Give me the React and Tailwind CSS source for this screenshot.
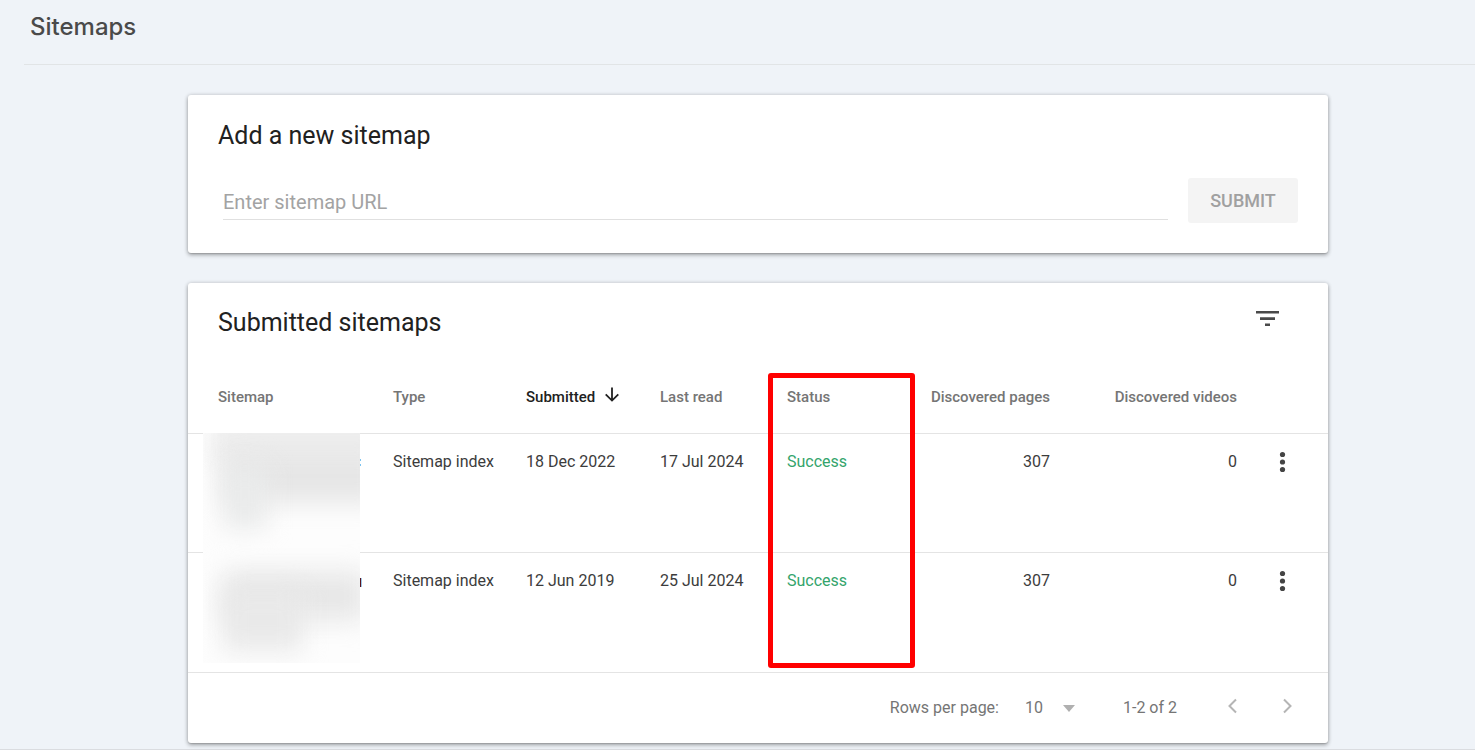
import React from "react";

const rows = [
  { type: "Sitemap index", submitted: "18 Dec 2022", read: "17 Jul 2024", status: "Success", pages: 307, videos: 0 },
  { type: "Sitemap index", submitted: "12 Jun 2019", read: "25 Jul 2024", status: "Success", pages: 307, videos: 0 },
];

const card =
  "rounded-[3px] bg-white shadow-[0_2px_4px_rgba(0,0,0,0.3),0_0_4px_rgba(0,0,0,0.14),0_1px_1px_rgba(0,0,0,0.1)]";

function FilterIcon() {
  return (
    <svg viewBox="0 0 30 30" className="size-[30px]" fill="currentColor" aria-hidden="true">
      <path d="M3 7h23v2.600h-23zM7 13.300h15v2.600h-15zM12 19.500h5v2.600h-5z" />
    </svg>
  );
}

function ArrowDownIcon() {
  return (
    <svg viewBox="0 0 16 16" className="size-4" fill="none" stroke="currentColor" strokeWidth="1.8" aria-hidden="true">
      <path d="M8 1.500v13M1.7 8.300 8 14.600l6.3-6.3" />
    </svg>
  );
}

function MoreIcon() {
  return (
    <svg viewBox="0 0 30 30" className="size-[30px]" fill="currentColor" aria-hidden="true">
      <circle cx="15.500" cy="7.5" r="2.6" />
      <circle cx="15.500" cy="15" r="2.6" />
      <circle cx="15.500" cy="22.5" r="2.6" />
    </svg>
  );
}

function Chevron({ d }) {
  return (
    <svg viewBox="0 0 16 16" className="size-4" fill="none" stroke="currentColor" strokeWidth="2" aria-hidden="true">
      <path d={d} />
    </svg>
  );
}

function Redaction() {
  return (
    <div className="absolute -top-px left-[15px] h-[230px] w-[159px]" aria-hidden="true">
      <div className="relative h-full w-[157px] overflow-hidden bg-[#fdfdfd]">
        <div className="absolute -top-8 left-2 h-16 w-52 bg-[#efefef] blur-[10px]" />
        <div className="absolute top-4 left-5 h-[54px] w-40 bg-[#e6e6e6] blur-[12px]" />
        <div className="absolute top-8 left-5 h-16 w-11 bg-[#eaebeb] blur-[12px]" />
        <div className="absolute top-[138px] left-5 h-[50px] w-36 bg-[#e7e7e7] blur-[13px]" />
        <div className="absolute top-[156px] left-5 h-[62px] w-20 bg-[#e9e9e9] blur-[12px]" />
      </div>
      <div className="absolute top-[26px] right-px h-[7px] w-px border-y-2 border-[#7cc4f0]" />
      <div className="absolute top-[145px] right-0 h-[9px] w-0.5 border-r border-[#9bc9ea] bg-[#5a1420]" />
    </div>
  );
}

export default function App() {
  return (
    <div className="flex min-h-screen flex-col border-b border-[#dadce0] bg-[#eff3f8] font-['Roboto',sans-serif] text-[#212121]">
      <header className="ml-6 border-b border-[#e1e4e6] px-1.5 pt-[9px] pb-[19px]">
        <h1 className="font-['Inter',sans-serif] text-2xl leading-9 font-medium text-[#4a4a4a]">Sitemaps</h1>
      </header>

      <main className="pt-[30px] pb-1.5 pl-[41px]">
        <div className="mx-auto flex max-w-[1140px] flex-col gap-[30px]">
          <section className={`${card} px-[30px] pt-[21px] pb-[30px]`}>
            <h2 className="text-[25px] leading-10">Add a new sitemap</h2>
            <form className="mt-[22px] flex gap-5 pl-[5px]" onSubmit={(e) => e.preventDefault()}>
              <input
                type="text"
                aria-label="Sitemap URL"
                placeholder="Enter sitemap URL"
                className="h-[42px] min-w-0 flex-1 border-b border-[#e0e0e0] pt-1.5 text-xl outline-none placeholder:text-[#a3a3a3]"
              />
              <button type="submit" disabled className="h-[45px] w-[110px] rounded-[3px] bg-[#f4f4f4] text-lg font-medium text-[#a0a0a0]">
                SUBMIT
              </button>
            </form>
          </section>

          <section className={card}>
            <div className="flex items-center justify-between pt-5 pr-[45px] pl-[30px]">
              <h2 className="text-[25px] leading-10">Submitted sitemaps</h2>
              <button type="button" aria-label="Filter" className="-mt-2 text-[#4a4a4a]">
                <FilterIcon />
              </button>
            </div>

            <table className="mt-[17px] w-full table-fixed border-separate border-spacing-0 text-base">
              <colgroup>
                <col className="w-[190px]" />
                <col className="w-[133px]" />
                <col className="w-[134px]" />
                <col className="w-[127px]" />
                <col className="w-[145px]" />
                <col className="w-[148px]" />
                <col className="w-[187px]" />
                <col className="w-[76px]" />
              </colgroup>
              <thead>
                <tr className="h-[74px] text-left text-[15px] whitespace-nowrap text-[#757575] *:border-b *:border-[#e4e4e4] *:pt-0.5 *:font-medium">
                  <th className="pl-[30px]">Sitemap</th>
                  <th className="pl-[15px]">Type</th>
                  <th className="pl-[15px] text-[#212121]" aria-sort="descending">
                    <span className="flex items-start gap-[9px]">
                      Submitted
                      <ArrowDownIcon />
                    </span>
                  </th>
                  <th className="pl-[15px]">Last read</th>
                  <th className="relative pl-[15px]">
                    Status
                    <div className="pointer-events-none absolute top-[13px] -left-1 h-[295px] w-[147px] rounded-[3px] border-5 border-[#ff0000]" />
                  </th>
                  <th className="pr-[15px] text-right">Discovered pages</th>
                  <th className="pr-[15px] text-right">Discovered videos</th>
                  <th aria-label="Actions" />
                </tr>
              </thead>
              <tbody>
                {rows.map((row, i) => (
                  <tr
                    key={row.submitted}
                    className={`${i === 0 ? "h-[119px]" : "h-[120px]"} align-top leading-6 whitespace-nowrap text-[#3c3c3c] *:border-b *:border-[#e4e4e4] *:pt-4`}
                  >
                    <td className="relative">{i === 0 && <Redaction />}</td>
                    <td className="pl-[15px]">{row.type}</td>
                    <td className="pl-[15px]">{row.submitted}</td>
                    <td className="pl-[15px]">{row.read}</td>
                    <td className="pl-[15px] text-[#34a46c]">{row.status}</td>
                    <td className="pr-[15px] text-right">{row.pages}</td>
                    <td className="pr-[15px] text-right">{row.videos}</td>
                    <td className="pl-[15px]">
                      <button type="button" aria-label="More options" className="-mt-[3px] block text-[#444]">
                        <MoreIcon />
                      </button>
                    </td>
                  </tr>
                ))}
              </tbody>
            </table>

            <div className="flex h-[70px] items-center justify-end pr-[33px] text-base text-[#757575]">
              <label htmlFor="page-size">Rows per page:</label>
              <div className="relative ml-[26px] flex items-center">
                <select id="page-size" defaultValue="10" className="w-[51px] appearance-none bg-transparent">
                  <option>10</option>
                  <option>25</option>
                  <option>50</option>
                </select>
                <svg viewBox="0 0 14 7" className="pointer-events-none absolute right-0 h-[7px] w-3.5 fill-[#b0b0b0]" aria-hidden="true">
                  <path d="M1 0h12L7 7z" />
                </svg>
              </div>
              <span className="ml-[47px]">1-2 of 2</span>
              <div className="ml-[47px] flex gap-[39px] pb-1 text-[#b5b5b5]">
                <button type="button" aria-label="Previous page">
                  <Chevron d="M12 1.500 5.500 8l6.500 6.500" />
                </button>
                <button type="button" aria-label="Next page">
                  <Chevron d="m5 1.500 6.500 6.500L5 14.500" />
                </button>
              </div>
            </div>
          </section>
        </div>
      </main>
    </div>
  );
}
